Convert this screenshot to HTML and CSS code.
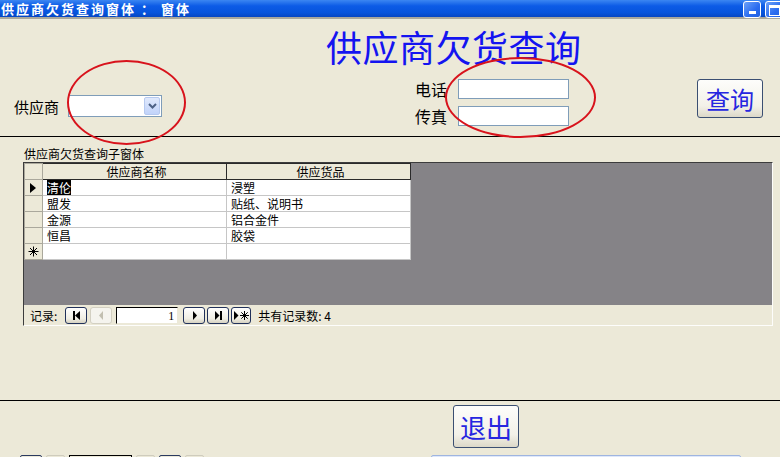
FILE: index.html
```html
<!DOCTYPE html>
<html lang="zh-cn">

<head>
    <meta charset="UTF-8">
    <title>供应商欠货查询窗体</title>
    <link rel="stylesheet" href="styles.css">
</head>

<body>
    <div class="titlebar">
        <span class="caption">供应商欠货查询窗体 ： 窗体</span>
        <span class="tb-btn tb-min"><i></i></span>
        <span class="tb-btn tb-max"><i></i></span>
    </div>

    <div class="header">
        <h1 class="form-title">供应商欠货查询</h1>
        <div class="criteria">
            <div class="field supplier">
                <label>供应商</label>
                <div class="combo">
                    <span class="combo-arrow">
                        <svg width="9" height="6" viewBox="0 0 9 6"><path d="M1 1 L4.5 4.5 L8 1" fill="none" stroke="#4d6185" stroke-width="2"/></svg>
                    </span>
                </div>
            </div>
            <div class="contact">
                <div class="field">
                    <label>电话</label>
                    <div class="textbox"></div>
                </div>
                <div class="field">
                    <label>传真</label>
                    <div class="textbox"></div>
                </div>
            </div>
            <button class="btn btn-query">查询</button>
        </div>
        <!-- 红圈标注 -->
        <span class="mark mark-supplier"></span>
        <span class="mark mark-contact"></span>
    </div>

    <div class="detail">
        <div class="sub-caption">供应商欠货查询子窗体</div>
        <div class="subform">
            <div class="sheet">
                <table class="grid">
                    <tr>
                        <th class="sel"></th>
                        <th>供应商名称</th>
                        <th>供应货品</th>
                    </tr>
                    <tr>
                        <td class="sel"><svg width="7" height="10" viewBox="0 0 7 10"><polygon points="0,0 6,5 0,10" fill="#000"/></svg></td>
                        <td><span class="hl">清伦</span></td>
                        <td>浸塑</td>
                    </tr>
                    <tr>
                        <td class="sel"></td>
                        <td>盟发</td>
                        <td>贴纸、说明书</td>
                    </tr>
                    <tr>
                        <td class="sel"></td>
                        <td>金源</td>
                        <td>铝合金件</td>
                    </tr>
                    <tr>
                        <td class="sel"></td>
                        <td>恒昌</td>
                        <td>胶袋</td>
                    </tr>
                    <tr>
                        <td class="sel"><svg width="11" height="11" viewBox="0 0 11 11"><path d="M5.5 0.5 V10.5 M0.5 5.5 H10.5 M2 2 L9 9 M9 2 L2 9" stroke="#000" stroke-width="1"/></svg></td>
                        <td></td>
                        <td></td>
                    </tr>
                </table>
            </div>
            <div class="navbar">
                <span class="nav-label">记录:</span>
                <span class="nav-btn first"><svg width="9" height="9" viewBox="0 0 9 9"><rect x="1" y="0" width="2" height="9" fill="#000"/><polygon points="8,0 3,4.5 8,9" fill="#000"/></svg></span>
                <span class="nav-btn prev off"><svg width="9" height="9" viewBox="0 0 9 9"><polygon points="6,0 2,4.5 6,9" fill="#c2bfb0"/></svg></span>
                <span class="nav-pos">1</span>
                <span class="nav-btn next"><svg width="9" height="9" viewBox="0 0 9 9"><polygon points="3,0 7,4.5 3,9" fill="#000"/></svg></span>
                <span class="nav-btn last"><svg width="9" height="9" viewBox="0 0 9 9"><polygon points="1,0 5.5,4.5 1,9" fill="#000"/><rect x="6" y="0" width="2" height="9" fill="#000"/></svg></span>
                <span class="nav-btn new"><svg width="15" height="9" viewBox="0 0 15 9"><polygon points="0,0 4.5,4.5 0,9" fill="#000"/><path d="M10.5 0 V9 M6 4.5 H15 M7.3 1.3 L13.7 7.7 M13.7 1.3 L7.3 7.7" stroke="#000" stroke-width="1"/></svg></span>
                <span class="nav-count">共有记录数: 4</span>
            </div>
        </div>
    </div>

    <div class="footer">
        <button class="btn btn-exit">退出</button>
        <div class="strip">
            <span class="s1"></span><span class="s2"></span><span class="s3"></span><span class="s2"></span><span class="s1"></span><span class="s2"></span>
            <span class="s4"></span>
        </div>
    </div>
</body>

</html>
```

FILE: styles.css
```css
html,
body {
    margin: 0;
    padding: 0;
    width: 780px;
    height: 457px;
    overflow: hidden;
    background-color: #ece9d8;
    font-family: "Noto Sans CJK SC", "Liberation Sans", sans-serif;
    color: #000;
}

.titlebar {
    height: 17px;
    display: flex;
    align-items: center;
    background: linear-gradient(#3b86f2, #0c5be6 35%, #0754dc 75%, #0646c2);
    border-bottom: 2px solid #aaa89c;
}

.caption {
    flex: 1;
    padding-left: 1px;
    color: #fff;
    font-size: 13px;
    font-weight: bold;
    line-height: 16px;
    letter-spacing: 2px;
    white-space: pre;
}

.tb-btn {
    width: 16px;
    height: 15px;
    margin-top: 1px;
    border: 1px solid #fff;
    border-radius: 3px;
    background: linear-gradient(135deg, #6da2f8, #2a6cf0 60%, #2160e0);
    display: flex;
    justify-content: center;
}

.tb-min {
    margin-right: 4px;
}

.tb-min i {
    width: 7px;
    height: 3px;
    margin-top: 9px;
    background-color: #fff;
}

.tb-max {
    margin-right: -3px;
}

.tb-max i {
    width: 9px;
    height: 7px;
    margin-top: 3px;
    border: 1px solid #fff;
    border-top-width: 3px;
}

/* 窗体页眉 */
.header {
    position: relative;
    height: 117px;
    border-bottom: 1px solid #000;
}

.form-title {
    margin: 0;
    padding: 7px 0 0 326px;
    font-size: 36px;
    line-height: 40px;
    font-weight: normal;
    color: #1414f0;
    letter-spacing: 0.5px;
    white-space: nowrap;
}

.criteria {
    display: flex;
    align-items: flex-start;
}

.field {
    display: flex;
    align-items: center;
}

.field label {
    white-space: nowrap;
}

.supplier {
    margin: 29px 0 0 14px;
    gap: 9px;
}

.supplier label {
    font-size: 15px;
}

.combo {
    width: 94px;
    height: 22px;
    box-sizing: border-box;
    border: 1px solid #7f9db9;
    background-color: #fff;
    display: flex;
    justify-content: flex-end;
    align-items: stretch;
    padding: 1px;
}

.combo-arrow {
    width: 14px;
    border: 1px solid #b6c9ef;
    border-radius: 2px;
    background: linear-gradient(#e0e9fc, #c1d3fa);
    display: flex;
    align-items: center;
    justify-content: center;
}

.contact {
    margin: 13px 0 0 253px;
    display: flex;
    flex-direction: column;
    gap: 7px;
}

.contact .field {
    gap: 11px;
}

.contact label {
    font-size: 16px;
    line-height: 20px;
}

.textbox {
    width: 111px;
    height: 20px;
    box-sizing: border-box;
    border: 1px solid #7f9db9;
    background-color: #fff;
}

.btn {
    box-sizing: border-box;
    padding: 0;
    border: 1px solid #3b4f72;
    border-radius: 3px;
    background: linear-gradient(#fdfdfb, #f3f1e8 70%, #dcd8c8);
    color: #2626e0;
    font-family: "Noto Sans CJK SC", sans-serif;
    font-weight: normal;
}

.btn-query {
    margin: 13px 0 0 128px;
    width: 66px;
    height: 39px;
    font-size: 24px;
    line-height: 1;
}

.mark {
    position: absolute;
    border: 2px solid #d8131c;
    border-radius: 50%;
}

.mark-supplier {
    left: 67px;
    top: 41px;
    width: 115px;
    height: 81px;
}

.mark-contact {
    left: 445px;
    top: 38px;
    width: 147px;
    height: 77px;
}

/* 主体节 */
.detail {
    height: 263px;
    padding-top: 10px;
    box-sizing: border-box;
}

.sub-caption {
    margin-left: 24px;
    font-size: 12px;
    line-height: 14px;
    margin-bottom: 1px;
}

.subform {
    margin-left: 23px;
    width: 750px;
    height: 164px;
    box-sizing: border-box;
    border-top: 1px solid #3c3c3c;
    border-left: 1px solid #3c3c3c;
    border-right: 1px solid #fdfdfb;
    border-bottom: 1px solid #fdfdfb;
    display: flex;
    flex-direction: column;
}

.sheet {
    height: 142px;
    background-color: #858387;
}

.grid {
    border-collapse: collapse;
    font-size: 12px;
    table-layout: fixed;
}

.grid tr {
    height: 16px;
}

.grid th,
.grid td {
    padding: 0 0 0 4px;
    height: 15px;
    line-height: 14px;
    white-space: nowrap;
    overflow: hidden;
}

.grid th {
    width: 179px;
    font-weight: normal;
    text-align: center;
    background-color: #ece9d8;
    border: 1px solid #2a2a2a;
}

.grid td {
    background-color: #fff;
    border: 1px solid #c6c6c6;
}

.grid .sel {
    width: 17px;
    padding: 0;
    text-align: center;
    background-color: #ece9d8;
    border: 1px solid #aaa89c;
}

.grid .sel svg {
    display: block;
    margin: 0 auto;
}

.hl {
    background-color: #000;
    color: #fff;
}

.navbar {
    flex: 1;
    display: flex;
    align-items: center;
    padding-left: 6px;
    font-size: 12px;
}

.nav-label {
    margin-right: 8px;
}

.nav-btn {
    width: 22px;
    height: 17px;
    box-sizing: border-box;
    border: 1px solid #21315a;
    border-radius: 3px;
    background: linear-gradient(#fff, #f0eee4 70%, #d6d2c2);
    display: flex;
    align-items: center;
    justify-content: center;
}

.nav-btn.off {
    border-color: #d3d0c2;
    background: #f5f4ee;
}

.nav-btn.new {
    width: 20px;
}

.first {
    margin-right: 3px;
}

.prev {
    margin-right: 4px;
}

.nav-pos {
    width: 62px;
    height: 17px;
    box-sizing: border-box;
    border-top: 1px solid #000;
    border-left: 1px solid #000;
    border-right: 1px solid #ece9d8;
    border-bottom: 1px solid #ece9d8;
    background-color: #fff;
    text-align: right;
    padding-right: 3px;
    font-family: "Liberation Serif", serif;
    font-size: 12px;
    line-height: 16px;
    margin-right: 5px;
}

.next,
.last {
    margin-right: 2px;
}

.nav-count {
    margin-left: 7px;
}

/* 窗体页脚 */
.footer {
    border-top: 1px solid #000;
}

.btn-exit {
    display: block;
    margin: 4px 0 0 453px;
    width: 66px;
    height: 43px;
    font-size: 26px;
    line-height: 1;
}

.strip {
    margin-top: 7px;
    display: flex;
    gap: 4px;
    padding-left: 20px;
}

.strip span {
    height: 6px;
    box-sizing: border-box;
    border-radius: 2px 2px 0 0;
}

.strip .s1 {
    width: 22px;
    border: 1px solid #2a3a60;
}

.strip .s2 {
    width: 19px;
    border: 1px solid #cfccbd;
}

.strip .s3 {
    width: 63px;
    border: 1px solid #000;
    border-radius: 0;
}

.strip .s4 {
    width: 310px;
    margin-left: 223px;
    border: 1px solid #9fb5e0;
    background-color: #dfe8fa;
}
```
